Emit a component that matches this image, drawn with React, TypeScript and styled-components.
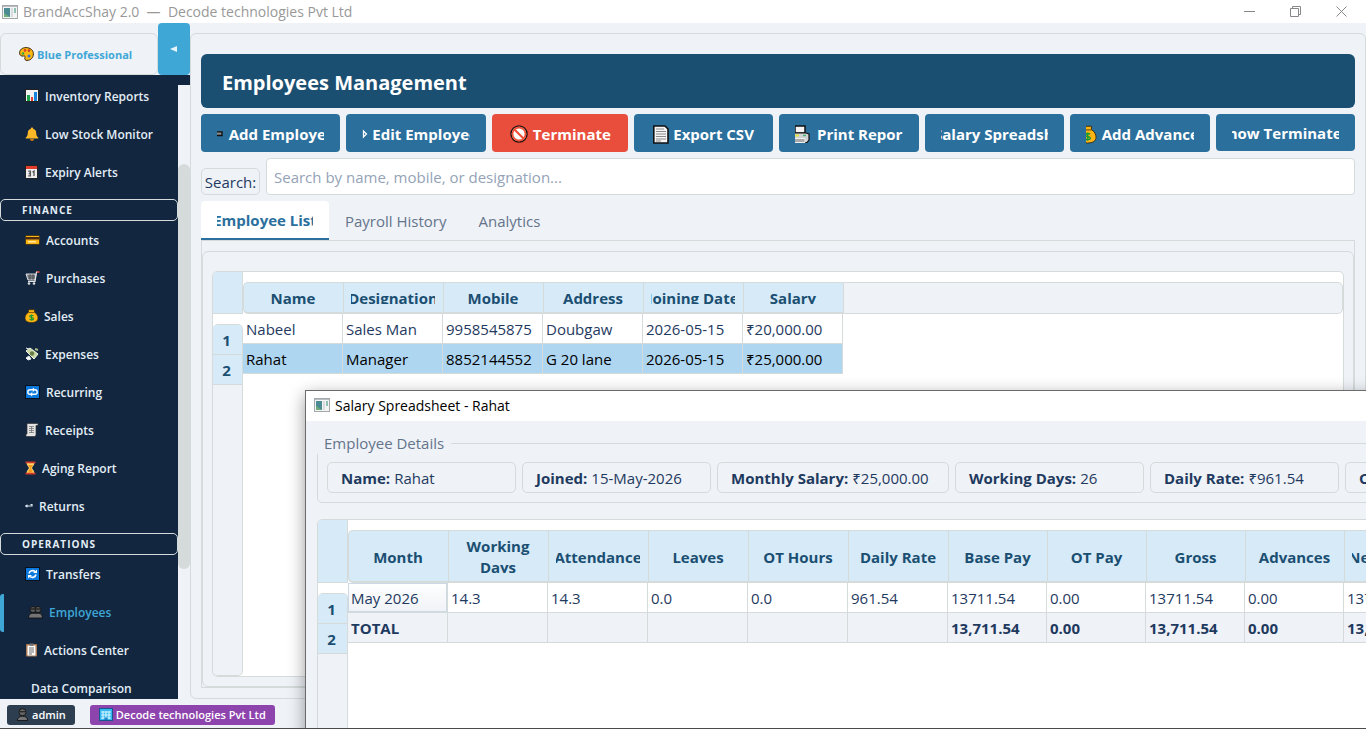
import React from "react";
import styled, { createGlobalStyle, css } from "styled-components";

const c = {
  bg: "#eff2f7",
  line: "#d5dbdb",
  navy: "#12263f",
  ink: "#1f3a5f",
  head: "#1b4f72",
  headBg: "#d6eaf8",
  primary: "#2b6f9d",
  sky: "#3fa7d6",
  muted: "#64748b",
};

const Global = createGlobalStyle`
  *, *::before, *::after { box-sizing: border-box; }
  html, body { margin: 0; }
  body { font-family: "Open Sans", "Noto Sans", sans-serif; font-size: 15px; color: ${c.ink}; background: ${c.bg}; }
  button, input { font: inherit; color: inherit; margin: 0; }
  button { border: 0; padding: 0; background: none; }
  a { color: inherit; text-decoration: none; }
`;

const Screen = styled.div`
  position: relative;
  display: flex;
  flex-direction: column;
  height: 100vh;
  overflow: hidden;
  border-bottom: 1px solid #4a4a4a;
`;

const TitleBar = styled.header`
  display: flex;
  align-items: center;
  flex: 0 0 23px;
  padding: 0 2px;
  gap: 5px;
  background: #fff;
  color: #999;
  font-size: 14px;
  white-space: pre;
`;

const WindowButtons = styled.div`
  display: flex;
  margin-left: auto;
`;

const WindowButton = styled.button`
  display: grid;
  place-items: center;
  width: 46px;
  height: 22px;
`;

const Body = styled.div`
  display: flex;
  flex: 1;
  min-height: 0;
`;

const Side = styled.div`
  display: flex;
  flex-direction: column;
  flex: 0 0 190px;
`;

const SideTop = styled.div`
  display: flex;
  align-items: flex-end;
  height: 52px;
`;

const ThemeButton = styled.button`
  display: flex;
  align-items: center;
  flex: 1;
  gap: 3px;
  height: 42px;
  padding-left: 18px;
  border: 1px solid ${c.line};
  border-radius: 6px;
  color: ${c.sky};
  font-size: 11px;
  font-weight: 700;
  white-space: nowrap;
`;

const Collapse = styled.button`
  display: grid;
  place-items: center;
  width: 32px;
  height: 52px;
  border-radius: 4px;
  background: ${c.sky};
`;

const SideScroll = styled.div`
  display: flex;
  flex: 1;
  min-height: 0;
`;

const Nav = styled.nav`
  flex: 1;
  padding-top: 3px;
  overflow: hidden;
  background: ${c.navy};
`;

const NavItem = styled.a<{ $active?: boolean }>`
  display: flex;
  align-items: center;
  gap: 6px;
  height: 38px;
  padding: 0 0 2px 25px;
  color: #e3eef7;
  font-size: 12px;
  font-weight: 600;
  white-space: nowrap;
  ${(p) => p.$active && css`
    padding-left: 24px;
    border-left: 4px solid ${c.sky};
    border-radius: 3px;
    color: ${c.sky};
  `}
`;

const NavSection = styled.h2`
  display: flex;
  align-items: center;
  height: 22px;
  margin: 7px 0 1px;
  padding-left: 21px;
  border: 1px solid ${c.line};
  border-radius: 5px;
  color: #e3eef7;
  font-size: 10px;
  font-weight: 700;
  letter-spacing: 1px;
`;

const Track = styled.div`
  display: flex;
  flex-direction: column;
  width: 12px;
  border-top: 10px solid ${c.navy};
`;

const TrackPart = styled.div<{ $grow: number; $thumb?: boolean }>`
  flex: ${(p) => p.$grow} 0 0;
  ${(p) => p.$thumb && css`
    border-radius: 6px;
    background: ${c.line};
  `}
`;

const Panel = styled.main`
  display: flex;
  flex-direction: column;
  flex: 1;
  min-width: 0;
  gap: 6px;
  margin-top: 10px;
  padding: 20px 10px 10px;
  border: 1px solid ${c.line};
  border-radius: 6px;
`;

const Heading = styled.h1`
  display: flex;
  align-items: center;
  flex: 0 0 54px;
  margin: 0;
  padding-left: 21px;
  padding-top: 2px;
  border-radius: 6px;
  background: ${c.head};
  color: #fff;
  font-size: 20px;
  font-weight: 700;
`;

const Toolbar = styled.div`
  display: flex;
  gap: 6px;
`;

const Action = styled.button<{ $danger?: boolean; $short?: boolean }>`
  flex: ${(p) => (p.$danger ? "0 0 136px" : "1 1 0")};
  min-width: 0;
  height: ${(p) => (p.$short ? 37 : 38)}px;
  padding: ${(p) => (p.$short ? 0 : 2)}px 16px 0;
  border-radius: 4px;
  background: ${(p) => (p.$danger ? "#e94e3d" : c.primary)};
  color: #fff;
  font-weight: 700;
`;

const ActionClip = styled.span`
  display: flex;
  align-items: center;
  justify-content: center;
  gap: 4px;
  overflow: hidden;
  white-space: nowrap;
  svg { flex: none; }
`;

const SearchRow = styled.div`
  display: flex;
  align-items: flex-end;
  gap: 6px;
`;

const SearchLabel = styled.label`
  display: grid;
  place-items: center;
  width: 59px;
  height: 27px;
  border: 1px solid ${c.line};
  border-radius: 5px;
`;

const SearchInput = styled.input`
  flex: 1;
  height: 37px;
  padding: 0 7px;
  border: 1px solid ${c.line};
  border-radius: 4px;
  background: #fff;
  &::placeholder { color: #94a3b8; opacity: 1; }
`;

const TabArea = styled.section`
  display: flex;
  flex-direction: column;
  flex: 1;
  min-height: 0;
`;

const TabList = styled.div`
  display: flex;
`;

const Tab = styled.button<{ $active?: boolean }>`
  height: 39px;
  padding: 1px 16px 0;
  color: ${c.muted};
  ${(p) => p.$active && css`
    width: 128px;
    padding: 0 16px;
    border-bottom: 2px solid ${c.primary};
    border-radius: 4px 4px 0 0;
    background: #fff;
    color: ${c.primary};
    font-weight: 700;
  `}
`;

const Pane = styled.div`
  display: flex;
  flex: 1;
  min-height: 0;
  padding-top: 10px;
  border: 1px solid ${c.line};
`;

const PaneInner = styled.div`
  display: flex;
  flex: 1;
  min-width: 0;
  padding: 19px 9px 9px;
  border: 1px solid ${c.line};
  border-radius: 6px;
`;

const Sheet = styled.div`
  display: flex;
  flex: 1;
  min-width: 0;
  border: 1px solid ${c.line};
  border-radius: 5px;
  background: #fff;
  overflow: hidden;
`;

const Gutter = styled.div`
  display: flex;
  flex-direction: column;
  flex: 0 0 30px;
`;

const Corner = styled.div<{ $lines: number }>`
  flex: none;
  height: ${(p) => 21 + p.$lines * 21}px;
  border-right: 1px solid ${c.line};
  border-bottom: 1px solid ${c.line};
  background: ${c.headBg};
`;

const RowNumbers = styled.div`
  flex: 1;
  margin-top: 10px;
  border: 1px solid ${c.line};
  border-left: 0;
  border-radius: 5px;
  background: ${c.bg};
  overflow: hidden;
`;

const RowNumber = styled.div`
  display: grid;
  place-items: center;
  height: 30px;
  padding-right: 2px;
  border-bottom: 1px solid ${c.line};
  background: ${c.headBg};
  color: ${c.head};
  font-weight: 700;
`;

const Grid = styled.table`
  align-self: flex-start;
  flex: 1;
  width: 100%;
  min-width: 0;
  margin-top: 10px;
  border-collapse: separate;
  border-spacing: 0;
  table-layout: fixed;
`;

const ColHead = styled.th`
  padding: 5px 8px 8px 7px;
  border: solid ${c.line};
  border-width: 1px 0 2px 1px;
  background: ${c.headBg};
  color: ${c.head};
  font-weight: 700;
  line-height: 21px;
  &:first-child { border-radius: 5px 0 0 5px; }
`;

const Filler = styled.th`
  padding: 0;
  border: 1px solid ${c.line};
  border-radius: 0 5px 5px 0;
  background: ${c.bg};
`;

const HeadClip = styled.div<{ $lines: number }>`
  height: ${(p) => p.$lines * 21 - 5}px;
  overflow: hidden;
`;

const HeadText = styled.div<{ $lines: number; $wrap: boolean }>`
  display: flex;
  align-items: center;
  justify-content: center;
  height: ${(p) => p.$lines * 21}px;
  white-space: ${(p) => (p.$wrap ? "normal" : "nowrap")};
`;

const Row = styled.tr<{ $selected?: boolean; $total?: boolean }>`
  ${(p) => p.$selected && css`
    color: #000;
    td:not(:empty) { background: #aed6f1; }
  `}
  ${(p) => p.$total && css`
    font-weight: 700;
    background: ${c.bg};
  `}
`;

const Cell = styled.td<{ $focus?: boolean }>`
  height: 30px;
  padding: 0 0 0 3px;
  border: solid ${c.line};
  border-width: 0 1px 1px 0;
  white-space: nowrap;
  overflow: hidden;
  ${(p) => p.$focus && css`
    background: linear-gradient(#fff, ${c.bg});
    box-shadow: inset 0 0 0 1px #cdd9e5;
  `}
`;

const StatusBar = styled.footer`
  display: flex;
  align-items: center;
  flex: 0 0 29px;
  gap: 15px;
  padding: 2px 7px 0;
`;

const Badge = styled.span<{ $color: string }>`
  display: flex;
  align-items: center;
  gap: 3px;
  height: 20px;
  padding: 0 9px;
  border-radius: 3px;
  background: ${(p) => p.$color};
  color: #fff;
  font-size: 11px;
  font-weight: 600;
  white-space: nowrap;
`;

const Dialog = styled.section`
  position: absolute;
  top: 390px;
  left: 305px;
  right: -260px;
  bottom: -40px;
  display: flex;
  flex-direction: column;
  border: 1px solid #6b6b6b;
  background: ${c.bg};
  box-shadow: 0 5px 16px rgba(0, 0, 0, 0.4);
`;

const DialogTitle = styled.h2`
  display: flex;
  align-items: center;
  flex: 0 0 30px;
  gap: 5px;
  margin: 0;
  padding: 0 0 2px 8px;
  background: #fff;
  color: #000;
  font-size: 14px;
  font-weight: 400;
`;

const DialogBody = styled.div`
  display: flex;
  flex-direction: column;
  flex: 1;
  gap: 16px;
  padding: 11px 11px 0;
  min-height: 0;
`;

const Details = styled.fieldset`
  display: flex;
  gap: 6px;
  margin: 0;
  padding: 8px 9px 9px;
  border: 1px solid ${c.line};
  border-radius: 5px;
`;

const Legend = styled.legend`
  margin-left: -10px;
  padding: 0 7px;
  background: ${c.bg};
  color: ${c.muted};
  line-height: 22px;
`;

const Fact = styled.span<{ $wide?: boolean }>`
  display: flex;
  align-items: center;
  flex: 0 0 ${(p) => (p.$wide ? 232 : 189)}px;
  gap: 4px;
  height: 31px;
  padding-left: 13px;
  border: 1px solid ${c.line};
  border-radius: 5px;
  white-space: nowrap;
`;

type IconProps = { w: number; h?: number; box?: string; children: React.ReactNode };
const Icon = ({ w, h = 14, box = "0 0 14 14", children }: IconProps) => (
  <svg width={w} height={h} viewBox={box} preserveAspectRatio="xMidYMid meet" aria-hidden="true">{children}</svg>
);

const AppIcon = () => (
  <Icon w={16} h={14} box="0 0 16 14">
    <rect x=".5" y=".5" width="15" height="13" fill="#f4f4f4" stroke="#a3a8ab" />
    <path d="M1 1.500h14" stroke="#b9bec2" />
    <rect x="2" y="3" width="6" height="9" fill="#4b8b93" />
    <path d="M2 12V8l6 4z" fill="#6fae7a" />
    <rect x="9" y="3" width="2" height="9" fill="#d9dcde" />
    <rect x="12" y="3" width="2" height="5" fill="#8fc0b4" />
  </Icon>
);

const Palette = () => (
  <Icon w={15} h={14} box="0 0 15 14">
    <path d="M7 .6C3 .6.6 3 .6 5.800s1.800 3.600 4 3.200c1.600-.3 1.800.6 1.300 1.800-.5 1.400.3 2.600 2.100 2.600 4 0 6.400-3 6.400-6.600C14.400 3.200 11.400.6 7 .6z" fill="#fdb913" stroke="#3a2a10" />
    <circle cx="4" cy="6.500" r="1.300" fill="#2aa84a" /><circle cx="6" cy="3.400" r="1.300" fill="#e23c2c" />
    <circle cx="10" cy="3.600" r="1.300" fill="#c0392b" /><circle cx="10" cy="9" r="1.500" fill="#2b6fe0" />
  </Icon>
);

const BarsIcon = () => (
  <Icon w={14}><rect x=".5" y=".5" width="13" height="12" fill="#f2f2f2" stroke="#222" />
    <path d="M2 6h3v6H2z" fill="#19a34a" /><path d="M6 8h2v4H6z" fill="#e2402f" /><path d="M9 3h3v9H9z" fill="#1684dd" /></Icon>
);
const Bell = () => (
  <Icon w={14}><path d="M7 .5c.8 0 1 .6 1.200 1.200 2 .6 3 2.200 3 4.300 0 2.500.8 3.500 2 4.500v1H.8v-1c1.200-1 2-2 2-4.500 0-2.100 1-3.700 3-4.300C6 1.100 6.200.5 7 .5z" fill="#fdb827" />
    <path d="M5 12h4a2 2 0 0 1-4 0z" fill="#c77b12" /></Icon>
);
const Cal = () => (
  <Icon w={14}><rect x=".5" y=".5" width="12" height="13" fill="#eee" stroke="#222" /><path d="M1 1h11v3H1z" fill="#e23d2d" />
    <path d="M3.200 6.200h2.200v4.600H3.200m.5-2.300h1.700M9 11V6L7.500 7.200" stroke="#555" strokeWidth="1.300" fill="none" /></Icon>
);
const Card = () => (
  <Icon w={15} box="0 0 15 14"><rect x=".5" y="2.500" width="14" height="9" rx="1" fill="#fbb416" stroke="#20160a" strokeWidth=".6" /><path d="M1 4h13v2.500H1z" fill="#4b2b12" /><path d="M3 8.800h8" stroke="#fff0b8" strokeWidth="1.300" /></Icon>
);
const Cart = () => (
  <Icon w={15} box="0 0 15 14"><path d="M1 3h10l-1 6H3z" fill="#8d9296" stroke="#d6dadc" /><path d="M3 5h7M3 7h7M5 3v6M8 3v6" stroke="#34383b" strokeWidth=".6" />
    <path d="M13.500 1h-2L10 10.500H3" stroke="#e2e5e6" fill="none" strokeWidth="1.200" /><circle cx="4" cy="12.500" r="1.300" fill="#ddd" /><circle cx="9" cy="12.500" r="1.300" fill="#ddd" /><path d="M12 1h2.500" stroke="#e04b32" strokeWidth="1.500" /></Icon>
);
const BagShape = () => (
  <>
    <path d="M3.500.7h6v2.600C12 4.800 13 7 13 9c0 3-2.500 4.500-6.500 4.500S0 12 0 9c0-2 1-4.200 3.500-5.700z" fill="#fcb514" stroke="#3b2a08" strokeWidth=".7" />
    <path d="M3.500 3.500h6" stroke="#8a5b0c" />
    <path d="M8.500 6.800c-1-.8-3.700-.8-3.700.6 0 1.500 3.800.9 3.800 2.400 0 1.300-2.800 1.400-4 .5M6.600 5.500v6.200" stroke="#1b9a34" strokeWidth="1.200" fill="none" />
  </>
);
const Bag = () => <Icon w={13} box="0 0 13 14"><BagShape /></Icon>;
const Cash = () => (
  <Icon w={14}><path d="M1 4l4-3 8 6-4 5z" fill="#c9d9a4" stroke="#f1f4e5" /><circle cx="7" cy="6.500" r="2.200" fill="#687b45" />
    <path d="M1 1l3 1M1 11l3-2 2 3-3 1z" stroke="#e9ecef" fill="#fff" /><path d="M10 2l3 1" stroke="#a8b884" strokeWidth="2" /></Icon>
);
const Repeat = () => (
  <Icon w={15} box="0 0 15 14"><rect x=".5" y=".5" width="14" height="13" fill="#0a78dc" stroke="#07111d" />
    <path d="M5 9.200a2.200 2.200 0 0 1 0-4.400h3M10 4.800a2.200 2.200 0 0 1 0 4.400H7" stroke="#fff" strokeWidth="1.400" fill="none" />
    <path d="M7.800 2.600l2.600 2.200-2.600 2.200zM7.200 7L4.600 9.200l2.600 2.200z" fill="#fff" /></Icon>
);
const Sync = () => (
  <Icon w={15} box="0 0 15 14"><rect x=".5" y=".5" width="14" height="13" fill="#0a78dc" stroke="#07111d" />
    <path d="M4 6.500a3.700 3.700 0 0 1 6-2M11 7.500a3.700 3.700 0 0 1-6 2" stroke="#fff" strokeWidth="1.600" fill="none" />
    <path d="M8 6h4V2.500zM7 8H3v3.500z" fill="#fff" /></Icon>
);
const Receipt = () => (
  <Icon w={14}><path d="M2 .5h11v2h-2v9.500l-1 1.500H1V11h1z" fill="#e4e4e4" stroke="#333" strokeWidth=".7" />
    <path d="M4 3.500h5M4 5.500h5M4 7.500h5M4 9.500h5M6.500 3v7" stroke="#777" strokeWidth=".8" /></Icon>
);
const Glass = () => (
  <Icon w={11} box="0 0 11 14"><path d="M1.500 1h8c0 3.500-2 4.500-2.500 6 .5 1.500 2.500 2.500 2.500 6h-8c0-3.500 2-4.500 2.500-6-.5-1.500-2.500-2.500-2.500-6z" fill="#fcd36a" />
    <path d="M3 4h5L6 7l2 4.500H3L5 7z" fill="#f49b1e" /><path d="M.5 1.300h10M.5 12.700h10" stroke="#d5382a" strokeWidth="1.800" /></Icon>
);
const Back = () => (
  <Icon w={8} box="1 0 8 14"><path d="M2 7h6V5.500H6.500" stroke="#dfe9f2" strokeWidth="1.200" fill="none" /><path d="M.8 7l2.700-1.800v3.600z" fill="#dfe9f2" /></Icon>
);
const People = () => (
  <Icon w={15} box="0 0 15 14"><circle cx="5" cy="4.500" r="3" fill="#5c5c5c" stroke="#0c0c0c" strokeWidth=".8" /><circle cx="10" cy="4.500" r="3" fill="#5c5c5c" stroke="#0c0c0c" strokeWidth=".8" />
    <path d="M.5 13c0-3 1.500-4.700 4-4.700h6c2.500 0 4 1.700 4 4.700z" fill="#747474" stroke="#0c0c0c" strokeWidth=".8" /><path d="M2.500 4h10" stroke="#1b1b1b" strokeWidth="1.200" /></Icon>
);
const Clip = () => (
  <Icon w={13} box="0 0 13 14"><rect x="1" y="1" width="11" height="12.500" rx="1" fill="#a97852" /><path d="M2.500 2.500h8v10h-8z" fill="#fff" /><path d="M4.500.5h4v2.500h-4z" fill="#777" />
    <path d="M4 5h5M4 7h5M4 9h5M4 11h3" stroke="#444" strokeWidth=".8" /></Icon>
);
const User = () => (
  <Icon w={13} h={13}><circle cx="7" cy="4.500" r="3.800" fill="#666" stroke="#151515" /><path d="M1.500 13.500c0-3 2-4.700 5.500-4.700s5.500 1.700 5.500 4.700z" fill="#747474" stroke="#151515" /><path d="M4 4h6" stroke="#222" strokeWidth="1.300" /></Icon>
);
const Building = () => (
  <Icon w={14} h={13} box="0 0 14 13"><rect width="14" height="13" fill="#17588f" /><path d="M1 1h12v11H1z" fill="#35b8f1" />
    <path d="M2 4h10M2 7h10M2 10h10M4 3v8M7 3v8M10 3v8" stroke="#cdf3ff" strokeWidth="1.200" /><path d="M5.500 9.500h3V12h-3z" fill="#1c7fc4" /></Icon>
);

const Plus = () => <Icon w={18} h={18} box="0 0 18 18"><path d="M8 6.800h7v3.700H8z" fill="#8a8a8a" stroke="#0d0d0d" strokeWidth="1.300" /></Icon>;
const Edit = () => <Icon w={14} h={18} box="0 0 14 18"><path d="M9.500 6v6l3-3z" fill="none" stroke="#fff" strokeWidth="1.300" /></Icon>;
const Ban = () => (
  <Icon w={20} h={18} box="0 0 20 18"><circle cx="10" cy="9" r="8" fill="#fff" stroke="#221311" strokeWidth="1.500" /><circle cx="10" cy="9" r="6.500" fill="#fff" stroke="#f05238" strokeWidth="1.800" /><path d="M5.500 4.500l9 9" stroke="#f05238" strokeWidth="2.200" /></Icon>
);
const Page = () => (
  <Icon w={16} h={19} box="0 0 16 19"><path d="M.8 1H12l3 3v14H.8z" fill="#f5f5f5" stroke="#111" strokeWidth="1.600" /><path d="M3 4h8M3 6.500h10M3 9h10M3 11.500h10M3 14h10M3 16h5" stroke="#8b8b8b" /></Icon>
);
const Printer = () => (
  <Icon w={24} h={19} box="0 0 24 19"><path d="M6 1h10v7H6z" fill="#f3f3f3" stroke="#111" strokeWidth="1.500" /><path d="M4 8h13l3 1v6l-2 2.500H4z" fill="#cfd3d6" stroke="#111" strokeWidth="1.200" /><path d="M6 10.500h4" stroke="#e3e34a" strokeWidth="2" />
    <path d="M14 10.500h3" stroke="#48b36e" strokeWidth="1.500" /><path d="M5 13.500h11v4H5z" fill="#a9a9a9" stroke="#eee" /></Icon>
);
const Chart = () => <Icon w={19} h={18}><rect width="14" height="14" fill="#eee" /><path d="M2 7h3v6H2zM6 8h2v5H6zM9 3h3v10H9z" fill="#19a34a" /></Icon>;
const BigBag = () => <Icon w={17} h={19} box="1.500 0 13 14"><BagShape /></Icon>;

const WinGlyph = ({ d }: { d: string }) => (
  <svg width="11" height="11" viewBox="0 0 11 11" fill="none" stroke="#888" aria-hidden="true"><path d={d} /></svg>
);

type NavEntry = { label: string; icon?: React.ReactNode; active?: boolean; section?: boolean };
const nav: NavEntry[] = [
  { label: "Inventory Reports", icon: <BarsIcon /> },
  { label: "Low Stock Monitor", icon: <Bell /> },
  { label: "Expiry Alerts", icon: <Cal /> },
  { label: "FINANCE", section: true },
  { label: "Accounts", icon: <Card /> },
  { label: "Purchases", icon: <Cart /> },
  { label: "Sales", icon: <Bag /> },
  { label: "Expenses", icon: <Cash /> },
  { label: "Recurring", icon: <Repeat /> },
  { label: "Receipts", icon: <Receipt /> },
  { label: "Aging Report", icon: <Glass /> },
  { label: "Returns", icon: <Back /> },
  { label: "OPERATIONS", section: true },
  { label: "Transfers", icon: <Sync /> },
  { label: "Employees", icon: <People />, active: true },
  { label: "Actions Center", icon: <Clip /> },
  { label: "Data Comparison", icon: <span /> },
];

const actions = [
  { label: "Add Employee", icon: <Plus /> },
  { label: "Edit Employee", icon: <Edit /> },
  { label: "Terminate", icon: <Ban />, danger: true },
  { label: "Export CSV", icon: <Page /> },
  { label: "Print Report", icon: <Printer /> },
  { label: "Salary Spreadsheet", icon: <Chart /> },
  { label: "Add Advance", icon: <BigBag /> },
  { label: "Show Terminated", short: true },
];

type SheetRow = { cells: string[]; selected?: boolean; total?: boolean; focusFirst?: boolean };
type Column = { label: string; width: number };
const cols = (labels: string[], width: number): Column[] => labels.map((label) => ({ label, width }));

const employeeCols = cols(["Name", "Designation", "Mobile", "Address", "Joining Date", "Salary"], 100);
const employeeRows: SheetRow[] = [
  { cells: ["Nabeel", "Sales Man", "9958545875", "Doubgaw", "2026-05-15", "₹20,000.00"] },
  { cells: ["Rahat", "Manager", "8852144552", "G 20 lane", "2026-05-15", "₹25,000.00"], selected: true },
];

const salaryCols = [
  ...cols(["Month", "Working Days", "Attendance", "Leaves", "OT Hours", "Daily Rate"], 100),
  ...cols(["Base Pay", "OT Pay", "Gross", "Advances", "Net\u00a0Payable"], 99),
];
const salaryRows: SheetRow[] = [
  { cells: ["May 2026", "14.3", "14.3", "0.0", "0.0", "961.54", "13711.54", "0.00", "13711.54", "0.00", "13711.54"], focusFirst: true },
  { cells: ["TOTAL", "", "", "", "", "", "13,711.54", "0.00", "13,711.54", "0.00", "13,711.54"], total: true },
];

const facts = [
  { k: "Name:", v: "Rahat" },
  { k: "Joined:", v: "15-May-2026" },
  { k: "Monthly Salary:", v: "₹25,000.00", wide: true },
  { k: "Working Days:", v: "26" },
  { k: "Daily Rate:", v: "₹961.54" },
  { k: "OT Rate:", v: "₹0.00" },
];

function DataSheet({ columns, rows, lines }: { columns: Column[]; rows: SheetRow[]; lines: number }) {
  return (
    <Sheet>
      <Gutter>
        <Corner $lines={lines} />
        <RowNumbers>
          {rows.map((_, i) => <RowNumber key={i}>{i + 1}</RowNumber>)}
        </RowNumbers>
      </Gutter>
      <Grid>
        <colgroup>
          {columns.map((col) => <col key={col.label} width={col.width} />)}
          <col />
        </colgroup>
        <thead>
          <tr>
            {columns.map((col) => (
              <ColHead key={col.label} scope="col">
                <HeadClip $lines={lines}>
                  <HeadText $lines={lines} $wrap={lines > 1}>{col.label}</HeadText>
                </HeadClip>
              </ColHead>
            ))}
            <Filler aria-hidden="true" />
          </tr>
        </thead>
        <tbody>
          {rows.map((row, r) => (
            <Row key={r} $selected={row.selected} $total={row.total}>
              {row.cells.map((text, i) => <Cell key={i} $focus={row.focusFirst && i === 0}>{text}</Cell>)}
            </Row>
          ))}
        </tbody>
      </Grid>
    </Sheet>
  );
}

export default function App() {
  return (
    <Screen>
      <Global />
      <TitleBar>
        <AppIcon />
        <span>{"BrandAccShay 2.0  —  Decode technologies Pvt Ltd"}</span>
        <WindowButtons>
          <WindowButton aria-label="Minimize"><WinGlyph d="M0 5.500h11" /></WindowButton>
          <WindowButton aria-label="Restore"><WinGlyph d="M.5 2.500h8v8h-8zM2.500 2.500v-2h8v8h-2" /></WindowButton>
          <WindowButton aria-label="Close"><WinGlyph d="M.5.5l10 10M10.500.5l-10 10" /></WindowButton>
        </WindowButtons>
      </TitleBar>

      <Body>
        <Side>
          <SideTop>
            <ThemeButton><Palette />Blue Professional</ThemeButton>
            <Collapse aria-label="Collapse sidebar">
              <svg width="8" height="8" viewBox="0 0 8 8" aria-hidden="true"><path d="M0 4l7-3v6z" fill="#e8f4fb" /></svg>
            </Collapse>
          </SideTop>
          <SideScroll>
            <Nav>
              {nav.map((n) => n.section
                ? <NavSection key={n.label}>{n.label}</NavSection>
                : <NavItem key={n.label} href="#" $active={n.active}>{n.icon}{n.label}</NavItem>)}
            </Nav>
            <Track>
              <TrackPart $grow={79} />
              <TrackPart $grow={405} $thumb />
              <TrackPart $grow={130} />
            </Track>
          </SideScroll>
        </Side>

        <Panel>
          <Heading>Employees Management</Heading>
          <Toolbar>
            {actions.map((a) => (
              <Action key={a.label} $danger={a.danger} $short={a.short}>
                <ActionClip>{a.icon}{a.label}</ActionClip>
              </Action>
            ))}
          </Toolbar>
          <SearchRow>
            <SearchLabel htmlFor="search">Search:</SearchLabel>
            <SearchInput id="search" placeholder="Search by name, mobile, or designation..." />
          </SearchRow>
          <TabArea>
            <TabList role="tablist">
              <Tab role="tab" aria-selected="true" $active><ActionClip>Employee List</ActionClip></Tab>
              <Tab role="tab" aria-selected="false">Payroll History</Tab>
              <Tab role="tab" aria-selected="false">Analytics</Tab>
            </TabList>
            <Pane>
              <PaneInner>
                <DataSheet columns={employeeCols} rows={employeeRows} lines={1} />
              </PaneInner>
            </Pane>
          </TabArea>
        </Panel>
      </Body>

      <StatusBar>
        <Badge $color="#2c3e50"><User />admin</Badge>
        <Badge $color="#8e44ad"><Building />Decode technologies Pvt Ltd</Badge>
      </StatusBar>

      <Dialog role="dialog" aria-label="Salary Spreadsheet - Rahat">
        <DialogTitle><AppIcon />Salary Spreadsheet - Rahat</DialogTitle>
        <DialogBody>
          <Details>
            <Legend>Employee Details</Legend>
            {facts.map((f) => <Fact key={f.k} $wide={f.wide}><b>{f.k}</b>{f.v}</Fact>)}
          </Details>
          <DataSheet columns={salaryCols} rows={salaryRows} lines={2} />
        </DialogBody>
      </Dialog>
    </Screen>
  );
}
